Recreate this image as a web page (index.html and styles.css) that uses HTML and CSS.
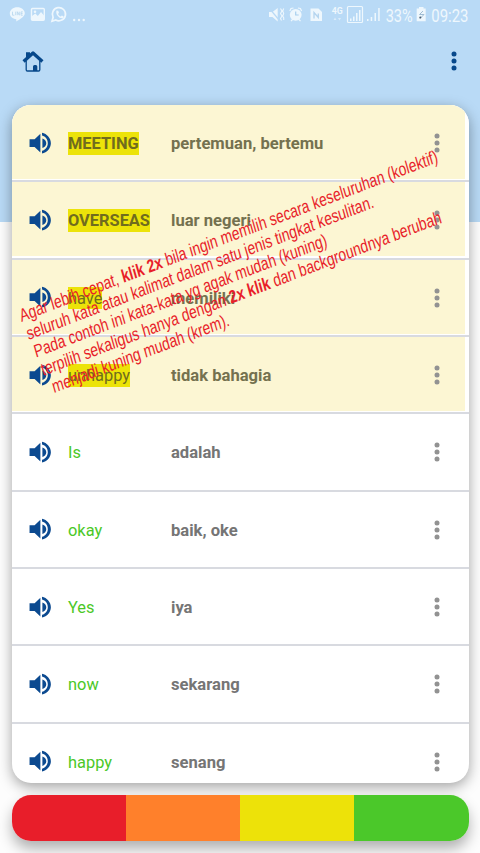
FILE: index.html
```html
<!DOCTYPE html>
<html lang="id">
<head>
<meta charset="utf-8">
<title>Kosakata</title>
<link rel="stylesheet" href="styles.css">
</head>
<body>
<svg class="defs" width="0" height="0">
  <symbol id="sound" viewBox="0 0 24 24"><path d="M3 8.700v6.600h4.300l4.900 4.700V4L7.300 8.700H3zM17.200 12c0-1.770-1.300-3.400-3.300-4.030v8.050c2-.62 3.300-2.250 3.300-4.020zM13.600 3.230v2.300c2.890.8 4.900 3.400 4.900 6.470s-2.010 5.670-4.900 6.470v2.300c4.210-.91 7.500-4.490 7.500-8.770s-3.290-7.860-7.500-8.770z"/></symbol>
  <symbol id="dots" viewBox="0 0 6 20"><circle cx="3" cy="3" r="2.5"/><circle cx="3" cy="10" r="2.5"/><circle cx="3" cy="17" r="2.5"/></symbol>
</svg>
<div class="screen">
  <header class="top">
    <div class="status">
      <svg class="status-left" viewBox="0 0 90 30" width="90" height="30">
        <path d="M17.300 7.200c-4.200 0-7.500 2.700-7.500 6.100 0 3.100 2.700 5.500 6.500 6v2.100c3.800-1.900 8.500-4.900 8.500-8.100 0-3.400-3.300-6.100-7.500-6.100z" fill="#eef7fd"/>
        <path d="M12.500 11.700v3.500h1.800M15.700 11.700v3.500M17.300 15.200v-3.500l2 3.500v-3.500M22.800 11.900h-1.800v3.300h1.800M21 13.500h1.600" fill="none" stroke="#b5d5ee" stroke-width=".8"/>
        <rect x="31.500" y="8.500" width="12.800" height="11.800" rx="1" fill="none" stroke="#eef7fd" stroke-width="1.400"/>
        <path d="M32 20v-4l3.300-2.500 2.500 2.500 3.200-4 3 3.500V20z" fill="#eef7fd"/>
        <circle cx="35" cy="11.700" r="1.300" fill="#eef7fd"/>
        <path d="M52 21.200l1.100-3.900a6.600 6.600 0 1 1 2.700 2.700z" fill="none" stroke="#eef7fd" stroke-width="1.700"/>
        <path d="M56.500 10.500l1.700.3.800 2-1 1.100c.6 1.300 1.500 2 2.700 2.500l1.200-1 1.800 1-.3 1.500c-3 1.800-8.400-2.800-6.900-7.400z" fill="#eef7fd"/>
        <circle cx="74.200" cy="20" r="1.200" fill="#eef7fd"/><circle cx="79" cy="20" r="1.200" fill="#eef7fd"/><circle cx="83.700" cy="20" r="1.200" fill="#eef7fd"/>
      </svg>
      <svg class="status-right" viewBox="268 0 212 30" width="212" height="30" fill="#eef7fd">
        <path d="M269 12h3.500l5.200-4v13.500l-5.200-4.500H269z"/>
        <path d="M269 8l11 13" stroke="#b9daf6" stroke-width="1.200"/>
        <path d="M280.500 8.500l1.500 2.500-1.500 2.500 1.500 2.500-1.500 2.500 1 2M283.700 8.500l-1 2.500 1 2.500-1 2.500 1 2v2" fill="none" stroke="#eef7fd" stroke-width="1.100"/>
        <circle cx="295.700" cy="14.800" r="5.900"/>
        <path d="M289.800 11l1.200-2.500 2.500-.5M301.600 11l-1.200-2.500-2.500-.5M291 21.200l2-2.200M300.500 21.200l-2-2.200" fill="none" stroke="#eef7fd" stroke-width="1.200"/>
        <path d="M295.700 11.500v3.500h3" fill="none" stroke="#a8cfee" stroke-width="1.200"/>
        <path d="M310.500 8.500h8l3.500 3.500v9h-11.500z"/>
        <path d="M314 18.500v-6l4.300 5v-4" fill="none" stroke="#b3d4ef" stroke-width="1.300"/>
        <text x="331.700" y="14.300" class="net" textLength="11" lengthAdjust="spacingAndGlyphs">4G</text>
        <path d="M333.500 20l1.500-2.500 1.500 2.500zM338 18l1.500 2.500 1.500-2.500z" opacity=".6"/>
        <rect x="347.500" y="6.500" width="15" height="16" rx="1" fill="none" stroke="#eef7fd" stroke-width="1.200"/>
        <path d="M350 18.500h1.500V21H350zM353 16.500h1.500V21H353zM356 13h1.500v8H356zM359 10h1.500v11H359z"/>
        <path d="M367 19h1.500v2H367zM370.700 17h1.500v4h-1.500zM374.500 13h1.500v8h-1.500zM378.200 8h1.500v13h-1.500z"/>
        <text x="385.700" y="21.600" class="num" textLength="27" lengthAdjust="spacingAndGlyphs">33%</text>
        <path d="M419 7h4.500v1.500h2.200v12.800h-9V8.500h2.300z"/>
        <path d="M423 11l-3.500 3.500h4.500l-4 4" fill="none" stroke="#9fbdd4" stroke-width="1"/><circle cx="420.300" cy="17.500" r="1" fill="#48596a"/>
        <text x="431.300" y="21.600" class="num" textLength="37.200" lengthAdjust="spacingAndGlyphs">09:23</text>
      </svg>
    </div>
    <nav class="bar">
      <svg class="home" viewBox="0 0 24 24">
        <path d="M5.200 12v8.800q0 1.200 1.200 1.200h11.200q1.200 0 1.200-1.200V12" fill="none" stroke="#07488b" stroke-width="1.300"/>
        <path d="M2.600 12.500L12 4l9.400 8.500" fill="none" stroke="#07488b" stroke-width="3.300" stroke-linejoin="round"/>
        <path d="M5 3.300h4v3L5 10zM12 22v-4.500q0-1.500 1.500-1.500h1.300q1.500 0 1.500 1.500V22z" fill="#07488b"/>
      </svg>
      <svg class="more"><use href="#dots"/></svg>
    </nav>
  </header>
  <main class="content">
    <ul class="list">
      <li class="row picked"><svg class="sound"><use href="#sound"/></svg><span class="word"><mark class="strong">MEETING</mark></span><span class="meaning">pertemuan, bertemu</span><svg class="dots"><use href="#dots"/></svg></li>
      <li class="row picked"><svg class="sound"><use href="#sound"/></svg><span class="word"><mark class="strong">OVERSEAS</mark></span><span class="meaning">luar negeri</span><svg class="dots"><use href="#dots"/></svg></li>
      <li class="row picked"><svg class="sound"><use href="#sound"/></svg><span class="word"><mark>have</mark></span><span class="meaning">memiliki</span><svg class="dots"><use href="#dots"/></svg></li>
      <li class="row picked"><svg class="sound"><use href="#sound"/></svg><span class="word"><mark>unhappy</mark></span><span class="meaning">tidak bahagia</span><svg class="dots"><use href="#dots"/></svg></li>
      <li class="row"><svg class="sound"><use href="#sound"/></svg><span class="word">Is</span><span class="meaning">adalah</span><svg class="dots"><use href="#dots"/></svg></li>
      <li class="row"><svg class="sound"><use href="#sound"/></svg><span class="word">okay</span><span class="meaning">baik, oke</span><svg class="dots"><use href="#dots"/></svg></li>
      <li class="row"><svg class="sound"><use href="#sound"/></svg><span class="word">Yes</span><span class="meaning">iya</span><svg class="dots"><use href="#dots"/></svg></li>
      <li class="row"><svg class="sound"><use href="#sound"/></svg><span class="word">now</span><span class="meaning">sekarang</span><svg class="dots"><use href="#dots"/></svg></li>
      <li class="row"><svg class="sound"><use href="#sound"/></svg><span class="word">happy</span><span class="meaning">senang</span><svg class="dots"><use href="#dots"/></svg></li>
    </ul>
    <div class="levels"><i class="red"></i><i class="orange"></i><i class="yellow"></i><i class="green"></i></div>
  </main>
  <svg class="note" viewBox="0 0 480 853" width="480" height="853">
    <text transform="translate(21.500 322) rotate(-21) skewX(-5)" textLength="447" lengthAdjust="spacingAndGlyphs">Agar lebih cepat, <tspan class="b">klik 2x</tspan> bila ingin memilih secara keseluruhan (kolektif)</text>
    <text transform="translate(28.500 340) rotate(-21) skewX(-5)" textLength="371" lengthAdjust="spacingAndGlyphs">seluruh kata atau kalimat dalam satu jenis tingkat kesulitan.</text>
    <text transform="translate(36 357.700) rotate(-21) skewX(-5)" textLength="313" lengthAdjust="spacingAndGlyphs">Pada contoh ini kata-kata yg agak mudah (kuning)</text>
    <text transform="translate(43 376) rotate(-21) skewX(-5)" textLength="428" lengthAdjust="spacingAndGlyphs">terpilih sekaligus hanya dengan <tspan class="b">2x klik</tspan> dan backgroundnya berubah</text>
    <text transform="translate(54 393) rotate(-21) skewX(-5)" textLength="189" lengthAdjust="spacingAndGlyphs">menjadi kuning mudah (krem).</text>
  </svg>
</div>
</body>
</html>
```

FILE: styles.css
```css
* { box-sizing: border-box; }
body { margin: 0; font-family: Roboto, "Liberation Sans", sans-serif; }
.defs { position: absolute; }
.screen {
  position: relative;
  height: 853px;
  overflow: hidden;
  background: linear-gradient(#b9daf6 222px, #fdfdfd 222px);
}
.top { height: 105px; }
.status { display: flex; justify-content: space-between; height: 30px; }
.num { font-size: 18.500px; }
.net { font-size: 8.500px; font-weight: 700; }
.bar { display: flex; justify-content: space-between; padding: 19px 22.800px 0 21px; }
.home { width: 24px; height: 24px; }
.more { width: 6px; height: 20px; margin-top: 1.500px; fill: #07488b; }
.content { padding: 0 11.500px; }
.list {
  margin: 0;
  padding: 0;
  height: 678.300px;
  overflow: hidden;
  list-style: none;
  background: #fff;
  border-radius: 19px;
  box-shadow: 0 4px 14px rgba(0, 0, 0, .36);
}
.row {
  display: flex;
  align-items: center;
  height: 77.330px;
  padding: 1.500px 29px 0 14px;
  border-bottom: 2px solid #d8dae0;
  color: #757575;
}
.picked { color: #74714f; background: linear-gradient(#fcf6d3, #fcf6d3) 0 0 / 453px 74px no-repeat, #fff; }
.sound { width: 28.300px; height: 28.300px; margin-top: -1px; fill: #0c4a90; flex: none; }
.word { width: 103px; margin-left: 14.200px; font-size: 16.400px; color: #4bc827; }
.meaning { flex: 1; font-size: 16.600px; font-weight: 700; }
mark { display: inline-block; height: 22.500px; line-height: 23px; color: #706c1e; background: #ece309; }
.strong { font-weight: 700; }
.dots { width: 6px; height: 20px; margin-top: -1px; fill: #929292; }
.levels {
  display: flex;
  height: 46.500px;
  margin-top: 11.500px;
  overflow: hidden;
  border-radius: 19px;
  box-shadow: 0 8px 14px rgba(0, 0, 0, .3);
}
.levels i { flex: 1; }
.red { background: #e81e2a; }
.orange { background: #ff802b; }
.yellow { background: #ede209; }
.green { background: #4bc82a; }
.note { position: absolute; left: 0; top: 0; font-family: "Liberation Sans", sans-serif; font-size: 18px; fill: #e81e2a; }
.b { font-weight: 700; }
```
